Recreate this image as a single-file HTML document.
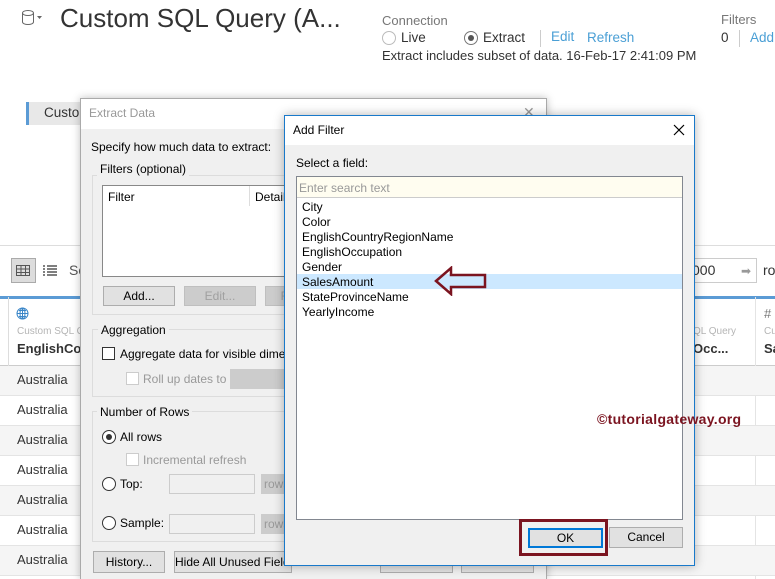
<!DOCTYPE html>
<html style="width:775px;height:579px;overflow:hidden"><head><meta charset="utf-8"><style>
*{box-sizing:border-box;margin:0;padding:0}
body{width:775px;height:579px;overflow:hidden;background:#fff;font-family:"Liberation Sans",sans-serif;position:relative;color:#333}
.a{position:absolute;white-space:nowrap}
.seg{font-family:"Liberation Sans",sans-serif;font-size:12px;color:#000}
.btn{position:absolute;white-space:nowrap;overflow:hidden;background:#e1e1e1;border:1px solid #adadad;font-family:"Liberation Sans",sans-serif;font-size:12px;text-align:center;color:#000;line-height:18px}
.dis{color:#a0a0a0;background:#ccc;border-color:#bfbfbf}
.grp{position:absolute;border:1px solid #dcdcdc}
.glab{position:absolute;white-space:nowrap;background:#f0f0f0;padding:0 3px;font-family:"Liberation Sans",sans-serif;font-size:12px;color:#000}
.cb{position:absolute;width:13px;height:13px;border:1px solid #333;background:#fff}
.rd{position:absolute;width:14px;height:14px;border:1px solid #333;border-radius:50%;background:#fff}
.row{position:absolute;left:0;width:775px;height:30px;border-bottom:1px solid #e4e4e4}
.au{position:absolute;left:17px;color:#333;font-family:"Liberation Sans",sans-serif;font-size:13px}
</style></head><body>
<svg class="a" style="left:21px;top:9px" width="26" height="18"><ellipse cx="7" cy="4" rx="5.5" ry="2.5" fill="none" stroke="#666"/><path d="M1.5 4V13A5.5 2.5 0 0 0 12.5 13V4" fill="none" stroke="#666"/><path d="M16 7h5l-2.5 3z" fill="#666"/></svg>
<div class="a" style="left:60px;top:3px;font-size:26px;color:#333">Custom SQL Query (A...</div>
<div class="a" style="left:382px;top:13px;font-size:13px;color:#777">Connection</div>
<div class="rd" style="left:382px;top:31px;border-color:#bbb"></div>
<div class="a" style="left:401px;top:30px;font-size:13.5px;color:#333">Live</div>
<div class="rd" style="left:464px;top:31px;border-color:#777"></div><div class="a" style="left:468px;top:35px;width:6px;height:6px;border-radius:50%;background:#555"></div>
<div class="a" style="left:483px;top:30px;font-size:13.5px;color:#333">Extract</div>
<div class="a" style="left:540px;top:30px;width:1px;height:17px;background:#ccc"></div>
<div class="a" style="left:551px;top:29px;font-size:13.5px;color:#4a9fd5">Edit</div>
<div class="a" style="left:587px;top:30px;font-size:13.5px;color:#4a9fd5">Refresh</div>
<div class="a" style="left:382px;top:48px;font-size:13px;color:#333">Extract includes subset of data. 16-Feb-17 2:41:09 PM</div>
<div class="a" style="left:721px;top:12px;font-size:13px;color:#777">Filters</div>
<div class="a" style="left:721px;top:30px;font-size:13.5px;color:#333">0</div>
<div class="a" style="left:739px;top:30px;width:1px;height:17px;background:#ccc"></div>
<div class="a" style="left:750px;top:30px;font-size:13.5px;color:#4a9fd5">Add</div>
<div class="a" style="left:26px;top:102px;width:60px;height:23px;background:#e8e8e8;border-left:3px solid #5b9bd5"></div>
<div class="a" style="left:44px;top:105px;font-size:13.5px;color:#333">Custo</div>
<div class="a" style="left:0;top:245px;width:775px;height:1px;background:#ddd"></div>
<div class="a" style="left:11px;top:258px;width:25px;height:25px;background:#dcdcdc;border:1px solid #aaa"></div>
<svg class="a" style="left:16px;top:265px" width="14" height="11"><rect x=".5" y=".5" width="13" height="10" fill="none" stroke="#555"/><path d="M0 4h14M0 7.5h14M5 0v11M9.5 0v11" stroke="#555"/></svg>
<svg class="a" style="left:43px;top:265px" width="14" height="11"><path d="M0 1h2M4 1h10M0 4h2M4 4h10M0 7h2M4 7h10M0 10h2M4 10h10" stroke="#555" stroke-width="1.5"/></svg>
<div class="a" style="left:69px;top:262px;font-size:14px;color:#555">So</div>
<div class="a" style="left:0;top:296px;width:775px;height:3px;background:#5b9bd5"></div>
<div class="a" style="left:0;top:365px;width:775px;height:1px;background:#ccc"></div>
<div class="a" style="left:8px;top:297px;width:1px;height:69px;background:#ddd"></div>
<div class="a" style="left:755px;top:297px;width:1px;height:300px;background:#e4e4e4"></div>
<svg class="a" style="left:16px;top:307px" width="13" height="13"><circle cx="6.5" cy="6.5" r="5.5" fill="none" stroke="#3a86c8"/><path d="M1 6.5h11M6.5 1v11M3 3.5h7M3 9.5h7" stroke="#3a86c8" fill="none"/><ellipse cx="6.5" cy="6.5" rx="2.5" ry="5.5" fill="none" stroke="#3a86c8"/></svg>
<div class="a" style="left:17px;top:326px;font-size:10px;color:#b5b5b5">Custom SQL Qu</div>
<div class="a" style="left:17px;top:341px;font-size:13px;font-weight:bold;color:#333">EnglishCo...</div>
<div class="row" style="top:366px;background:#f5f5f5"></div>
<div class="row" style="top:396px"></div>
<div class="row" style="top:426px;background:#f5f5f5"></div>
<div class="row" style="top:456px"></div>
<div class="row" style="top:486px;background:#f5f5f5"></div>
<div class="row" style="top:516px"></div>
<div class="row" style="top:546px;background:#f5f5f5"></div>
<div class="au" style="top:372px">Australia</div><div class="au" style="top:402px">Australia</div><div class="au" style="top:432px">Australia</div><div class="au" style="top:462px">Australia</div><div class="au" style="top:492px">Australia</div><div class="au" style="top:522px">Australia</div><div class="au" style="top:552px">Australia</div>
<div class="a" style="left:660px;top:258px;width:97px;height:25px;border:1px solid #ccc;background:#fff"></div>
<div class="a" style="left:692px;top:262px;font-size:14px;color:#333">000</div>
<div class="a" style="left:741px;top:264px;font-size:12px;color:#999">➡</div>
<div class="a" style="left:763px;top:262px;font-size:14px;color:#333">ro</div>
<div class="a" style="left:693px;top:326px;font-size:10px;color:#b5b5b5">QL Query</div>
<div class="a" style="left:693px;top:341px;font-size:13px;font-weight:bold;color:#333">Occ...</div>
<div class="a" style="left:764px;top:306px;font-size:13px;color:#777">#</div>
<div class="a" style="left:764px;top:326px;font-size:10px;color:#b5b5b5">Cu</div>
<div class="a" style="left:764px;top:341px;font-size:13px;font-weight:bold;color:#333">Sa</div>
<div class="a" style="left:578px;top:550px;font-size:12.5px;color:#333">£6,000.00 Clerical</div>
<!-- Extract Data dialog -->
<div class="a" style="left:80px;top:98px;width:467px;height:481px;background:#f0f0f0;border:1px solid #aaa;border-bottom:none;box-shadow:0 0 8px rgba(0,0,0,.25)"></div>
<div class="a" style="left:81px;top:99px;width:465px;height:30px;background:#fff"></div>
<div class="a seg" style="left:89px;top:106px;color:#999">Extract Data</div>
<div class="a" style="left:523px;top:104px;font-size:14px;color:#999">✕</div>
<div class="a seg" style="left:91px;top:140px">Specify how much data to extract:</div>
<div class="grp" style="left:92px;top:175px;width:200px;height:140px"></div>
<div class="glab" style="left:97px;top:162px">Filters (optional)</div>
<div class="a" style="left:102px;top:185px;width:190px;height:92px;background:#fff;border:1px solid #888"></div>
<div class="a seg" style="left:108px;top:190px">Filter</div>
<div class="a" style="left:249px;top:186px;width:1px;height:20px;background:#ddd"></div>
<div class="a seg" style="left:255px;top:190px">Details</div>
<div class="btn" style="left:103px;top:286px;width:72px;height:20px">Add...</div>
<div class="btn dis" style="left:184px;top:286px;width:72px;height:20px">Edit...</div>
<div class="btn dis" style="left:265px;top:286px;width:40px;height:20px">R</div>
<div class="grp" style="left:92px;top:329px;width:200px;height:68px"></div>
<div class="glab" style="left:98px;top:323px">Aggregation</div>
<div class="cb" style="left:102px;top:347px"></div>
<div class="a seg" style="left:120px;top:347px">Aggregate data for visible dimensions</div>
<div class="cb" style="left:126px;top:372px;border-color:#ccc"></div>
<div class="a seg" style="left:143px;top:372px;color:#999">Roll up dates to</div>
<div class="a" style="left:230px;top:369px;width:60px;height:20px;background:#ccc"></div>
<div class="grp" style="left:92px;top:411px;width:200px;height:131px"></div>
<div class="glab" style="left:97px;top:405px">Number of Rows</div>
<div class="rd" style="left:102px;top:430px"></div><div class="a" style="left:106px;top:434px;width:6px;height:6px;border-radius:50%;background:#333"></div>
<div class="a seg" style="left:120px;top:430px">All rows</div>
<div class="cb" style="left:126px;top:453px;border-color:#ccc"></div>
<div class="a seg" style="left:143px;top:453px;color:#999">Incremental refresh</div>
<div class="rd" style="left:102px;top:477px"></div>
<div class="a seg" style="left:120px;top:477px">Top:</div>
<div class="a" style="left:169px;top:474px;width:86px;height:20px;background:#f0f0f0;border:1px solid #ccc"></div>
<div class="a" style="left:261px;top:474px;width:30px;height:20px;background:#ccc"></div><div class="a seg" style="left:264px;top:477px;color:#999">rows</div>
<div class="rd" style="left:102px;top:516px"></div>
<div class="a seg" style="left:120px;top:516px">Sample:</div>
<div class="a" style="left:169px;top:514px;width:86px;height:20px;background:#f0f0f0;border:1px solid #ccc"></div>
<div class="a" style="left:261px;top:514px;width:30px;height:20px;background:#ccc"></div><div class="a seg" style="left:264px;top:517px;color:#999">rows</div>
<div class="btn" style="left:93px;top:551px;width:72px;height:22px;line-height:20px">History...</div>
<div class="btn" style="left:174px;top:551px;width:118px;height:22px;line-height:20px">Hide All Unused Fields</div>
<div class="btn" style="left:380px;top:551px;width:73px;height:22px;line-height:20px">OK</div>
<div class="btn" style="left:461px;top:551px;width:73px;height:22px;line-height:20px">Cancel</div>
<!-- Add Filter dialog -->
<div class="a" style="left:284px;top:115px;width:411px;height:451px;background:#f0f0f0;border:1px solid #1979ca;box-shadow:0 0 10px rgba(0,0,0,.3)"></div>
<div class="a" style="left:285px;top:116px;width:409px;height:29px;background:#fff"></div>
<div class="a seg" style="left:293px;top:123px">Add Filter</div>
<svg class="a" style="left:673px;top:124px" width="12" height="12"><path d="M1 1L11 11M11 1L1 11" stroke="#000" stroke-width="1.2"/></svg>
<div class="a seg" style="left:296px;top:156px">Select a field:</div>
<div class="a" style="left:296px;top:176px;width:387px;height:344px;background:#fff;border:1px solid #828790"></div>
<div class="a" style="left:297px;top:177px;width:385px;height:21px;background:#fffdf0;border-bottom:1px solid #ccc"></div>
<div class="a seg" style="left:299px;top:181px;color:#999">Enter search text</div>
<div class="a" style="left:297px;top:274px;width:385px;height:15px;background:#cce8ff"></div>
<div class="a seg" style="left:302px;top:200px;line-height:15px">City<br>Color<br>EnglishCountryRegionName<br>EnglishOccupation<br>Gender<br>SalesAmount<br>StateProvinceName<br>YearlyIncome</div>
<svg class="a" style="left:434px;top:266px" width="54" height="30"><path d="M2 15L17 2V9H51V21H17V28Z" fill="none" stroke="#7b1420" stroke-width="2.5" stroke-linejoin="miter"/></svg>
<div class="a" style="left:597px;top:411px;font-size:14px;font-weight:bold;color:#7b1420;font-family:'Liberation Sans',sans-serif;letter-spacing:.3px">©tutorialgateway.org</div>
<div class="a" style="left:519px;top:519px;width:89px;height:37px;border:3px solid #7b1420"></div>
<div class="btn" style="left:528px;top:528px;width:75px;height:20px;border:2px solid #0078d7;line-height:16px">OK</div>
<div class="btn" style="left:609px;top:527px;width:74px;height:21px">Cancel</div>
</body></html>
